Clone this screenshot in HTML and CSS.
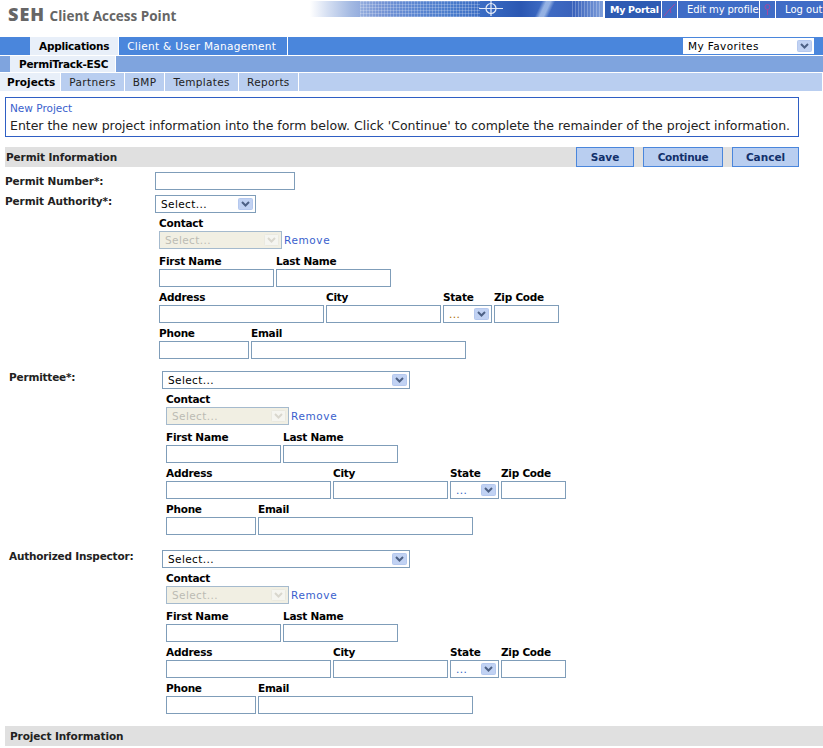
FILE: index.html
```html
<!DOCTYPE html>
<html lang="en">
<head>
    <meta charset="UTF-8">
    <meta name="viewport" content="width=device-width, initial-scale=1.0">
    <title>SEH Client Access Point</title>
    <link rel="stylesheet" href="styles.css">
</head>
<body>
    <header class="top">
        <div class="logo"><b>SEH</b> Client Access Point</div>
        <div class="banner">
            <svg class="cross" width="26" height="17" viewBox="0 0 26 17">
                <circle cx="13" cy="8.5" r="5" fill="none" stroke="#e4ebf7" stroke-width="1.2"/>
                <path d="M1 8.5H25M13 1V16" stroke="#e4ebf7" stroke-width="1.2"/>
            </svg>
        </div>
        <nav class="toplinks">
            <a class="current">My Portal</a>
            <span class="sep">
                <svg width="15" height="17" viewBox="0 0 15 17"><path d="M2 15L8 8L13 3M8 8L9 12" fill="none" stroke="#a3479f" stroke-width="1"/></svg>
            </span>
            <a class="edit">Edit my profile</a>
            <span class="sep">
                <svg width="15" height="17" viewBox="0 0 15 17"><circle cx="7.5" cy="6" r="2.5" fill="none" stroke="#a3479f"/><path d="M7.5 8.5V14" stroke="#a3479f"/></svg>
            </span>
            <a class="logout">Log out</a>
        </nav>
    </header>

    <div class="nav nav1">
        <a class="on">Applications</a>
        <a class="client">Client &amp; User Management</a>
        <select class="fav"><option>My Favorites</option></select>
    </div>
    <div class="nav nav2">
        <a class="on">PermiTrack-ESC</a>
    </div>
    <div class="nav nav3">
        <a class="on">Projects</a>
        <a>Partners</a>
        <a>BMP</a>
        <a>Templates</a>
        <a>Reports</a>
    </div>

    <div class="message">
        <div class="msg-title">New Project</div>
        <div class="msg-text">Enter the new project information into the form below. Click 'Continue' to complete the remainder of the project information.</div>
    </div>

    <div class="section">
        <span>Permit Information</span>
        <div class="buttons">
            <button class="b-save">Save</button>
            <button class="b-continue">Continue</button>
            <button class="b-cancel">Cancel</button>
        </div>
    </div>

    <div class="field number">
        <label>Permit Number*:</label>
        <input type="text" class="w140">
    </div>

    <div class="field authority">
        <label>Permit Authority*:</label>
        <div>
            <select class="w101"><option>Select...</option></select>
            <div class="contact">
                <div class="head">Contact</div>
                <div class="row">
                    <select class="w123" disabled><option>Select...</option></select>
                    <a class="remove">Remove</a>
                </div>
                <div class="row names">
                    <div class="col"><span>First Name</span><input type="text" class="w115"></div>
                    <div class="col"><span>Last Name</span><input type="text" class="w115"></div>
                </div>
                <div class="row">
                    <div class="col"><span>Address</span><input type="text" class="w165"></div>
                    <div class="col"><span>City</span><input type="text" class="w115"></div>
                    <div class="col"><span>State</span><select class="w49 brown"><option>...</option></select></div>
                    <div class="col"><span>Zip Code</span><input type="text" class="w65"></div>
                </div>
                <div class="row">
                    <div class="col"><span>Phone</span><input type="text" class="w90"></div>
                    <div class="col"><span>Email</span><input type="text" class="w215"></div>
                </div>
            </div>
        </div>
    </div>

    <div class="field party permittee">
        <label>Permittee*:</label>
        <div>
            <select class="w248"><option>Select...</option></select>
            <div class="contact">
                <div class="head">Contact</div>
                <div class="row">
                    <select class="w123" disabled><option>Select...</option></select>
                    <a class="remove">Remove</a>
                </div>
                <div class="row names">
                    <div class="col"><span>First Name</span><input type="text" class="w115"></div>
                    <div class="col"><span>Last Name</span><input type="text" class="w115"></div>
                </div>
                <div class="row">
                    <div class="col"><span>Address</span><input type="text" class="w165"></div>
                    <div class="col"><span>City</span><input type="text" class="w115"></div>
                    <div class="col"><span>State</span><select class="w49 blue"><option>...</option></select></div>
                    <div class="col"><span>Zip Code</span><input type="text" class="w65"></div>
                </div>
                <div class="row">
                    <div class="col"><span>Phone</span><input type="text" class="w90"></div>
                    <div class="col"><span>Email</span><input type="text" class="w215"></div>
                </div>
            </div>
        </div>
    </div>

    <div class="field party inspector">
        <label>Authorized Inspector:</label>
        <div>
            <select class="w248"><option>Select...</option></select>
            <div class="contact">
                <div class="head">Contact</div>
                <div class="row">
                    <select class="w123" disabled><option>Select...</option></select>
                    <a class="remove">Remove</a>
                </div>
                <div class="row names">
                    <div class="col"><span>First Name</span><input type="text" class="w115"></div>
                    <div class="col"><span>Last Name</span><input type="text" class="w115"></div>
                </div>
                <div class="row">
                    <div class="col"><span>Address</span><input type="text" class="w165"></div>
                    <div class="col"><span>City</span><input type="text" class="w115"></div>
                    <div class="col"><span>State</span><select class="w49 blue"><option>...</option></select></div>
                    <div class="col"><span>Zip Code</span><input type="text" class="w65"></div>
                </div>
                <div class="row">
                    <div class="col"><span>Phone</span><input type="text" class="w90"></div>
                    <div class="col"><span>Email</span><input type="text" class="w215"></div>
                </div>
            </div>
        </div>
    </div>

    <div class="section project">
        <span>Project Information</span>
    </div>
</body>
</html>
```

FILE: styles.css
```css
html, body {
    margin: 0;
    height: 748px;
    overflow: hidden;
}

body {
    font-family: 'DejaVu Sans', Verdana, sans-serif;
    font-size: 10.5px;
    color: #000;
    background: #fff;
}

/* header */
.top {
    display: flex;
    height: 37px;
}

.logo {
    flex: none;
    width: 310px;
    padding: 5px 0 0 8px;
    box-sizing: border-box;
    font-family: 'Open Sans', sans-serif;
    font-size: 13.5px;
    font-weight: 700;
    color: #666;
    line-height: 18px;
}

.logo b {
    font-size: 18px;
    letter-spacing: 1px;
    margin-right: 1px;
}

.banner {
    flex: none;
    display: flex;
    justify-content: flex-end;
    width: 293px;
    height: 16px;
    margin-top: 1px;
    padding-right: 99px;
    box-sizing: border-box;
    background:
        linear-gradient(115deg, transparent 0 40%, rgba(170, 195, 235, 0.8) 47% 53%, transparent 60%) 205px 0 / 60px 16px no-repeat,
        repeating-linear-gradient(90deg, rgba(255, 255, 255, 0.22) 0 1px, transparent 1px 3px) 50px 0 / 120px 16px no-repeat,
        repeating-linear-gradient(0deg, rgba(255, 255, 255, 0.22) 0 1px, transparent 1px 3px) 50px 0 / 120px 16px no-repeat,
        repeating-linear-gradient(90deg, rgba(255, 255, 255, 0.25) 0 1px, transparent 1px 3px) 262px 0 / 30px 16px no-repeat,
        linear-gradient(90deg, #fff 0%, #d5dff2 6%, #a3b9e2 14%, #7795d5 24%, #5f88d2 34%, #4a7ccc 48%, #3667c0 62%, #2b57b2 72%, #3f6cc4 80%, #3a62bb 90%, #7f9fdb 100%);
}

.cross {
    margin-top: -1px;
}

.toplinks {
    display: flex;
    align-items: stretch;
    height: 17px;
    margin-top: 0;
    margin-left: 2px;
    padding-top: 1px;
    flex: 1;
    font-size: 10px;
}

.toplinks a {
    display: flex;
    align-items: center;
    margin-right: 1px;
    background: #3f6cc6;
    color: #fff;
    white-space: nowrap;
}

.toplinks a.current {
    width: 56px;
    padding-left: 5px;
    box-sizing: border-box;
    background: #2e5bb3;
    font-weight: bold;
    font-size: 9.5px;
    letter-spacing: -0.3px;
}

.toplinks a.edit {
    width: 81px;
    padding-left: 9px;
    box-sizing: border-box;
    letter-spacing: -0.1px;
}

.toplinks a.logout {
    flex: 1;
    margin-right: 0;
    padding-left: 9px;
}

.toplinks .sep {
    width: 15px;
    margin-right: 1px;
    background: #3f6cc6;
}

/* tabs */
.nav {
    display: flex;
    align-items: stretch;
    margin-bottom: 1px;
}

.nav a {
    display: flex;
    align-items: center;
    padding: 0 8px;
    border-right: 1px solid #fff;
    color: #fff;
    letter-spacing: 0.2px;
}

.nav a.on {
    background: #e8eff9;
    color: #000;
    font-weight: bold;
    letter-spacing: -0.25px;
}

.nav1 {
    height: 18px;
    padding-left: 30px;
    background: #4a86dc;
}

.nav1 a.client {
    padding: 0 11px 0 8px;
    letter-spacing: 0.3px;
}

.nav1 a.on {
    padding: 0 9px;
}

.nav2 {
    height: 16px;
    padding-left: 10px;
    background: #7fa4de;
}

.nav2 a.on {
    padding: 0 7px 0 9px;
}

.nav3 {
    height: 18px;
    width: 822px;
    margin-bottom: 6px;
    background: #b9cef0;
}

.nav3 a {
    color: #222;
    padding: 0 8px;
    letter-spacing: 0.35px;
}

.nav3 a.on {
    padding: 0 5px 0 7px;
    letter-spacing: 0;
}

.nav .fav {
    width: 131px;
    height: 16px;
    margin: 1px 9px 0 auto;
    border: 0;
}

/* message */
.message {
    width: 794px;
    height: 40px;
    margin-left: 5px;
    box-sizing: border-box;
    border: 1px solid #2f5fc4;
    padding: 3px 4px;
}

.msg-title {
    color: #3a5fcd;
    line-height: 14px;
}

.msg-text {
    font-size: 12.5px;
    line-height: 21px;
    color: #222;
    letter-spacing: -0.01px;
    white-space: nowrap;
}

/* section bars */
.section {
    display: flex;
    align-items: center;
    justify-content: space-between;
    width: 794px;
    height: 20px;
    margin: 10px 0 0 5px;
    background: #e0e0e0;
    font-weight: bold;
    color: #222;
    letter-spacing: -0.1px;
}

.section > span {
    padding-left: 1px;
}

.section.project {
    width: auto;
    margin-top: 12px;
    padding-left: 4px;
}

.buttons {
    display: flex;
    gap: 9px;
}

.buttons button {
    height: 20px;
    padding: 0;
    border: 1px solid #4a86dc;
    background: #b9cef0;
    color: #12306b;
    font-family: inherit;
    font-size: 10.5px;
    font-weight: bold;
}

.buttons .b-continue { letter-spacing: -0.3px; }

.b-save { width: 58px; }
.b-continue { width: 80px; }
.b-cancel { width: 67px; }

/* form */
.field {
    display: flex;
    padding-left: 5px;
}

.field label {
    width: 150px;
    color: #222;
    font-weight: bold;
    padding-top: 1px;
    letter-spacing: -0.1px;
}

.number {
    margin-top: 5px;
}

.number label {
    padding-top: 3px;
}

.authority {
    margin-top: 5px;
}

.authority label {
    padding-top: 0;
}

.party {
    padding-left: 9px;
    margin-top: 12px;
}

.party label {
    width: 153px;
    padding-top: 0;
    letter-spacing: -0.2px;
}

.inspector {
    margin-top: 15px;
}

.contact {
    margin-left: 4px;
}

.head {
    height: 18px;
    line-height: 20px;
    font-weight: bold;
    letter-spacing: -0.25px;
}

.row {
    display: flex;
    gap: 2px;
    align-items: center;
}

.names {
    margin-top: 2px;
}

.col {
    display: flex;
    flex-direction: column;
}

.col span {
    height: 18px;
    line-height: 20px;
    font-weight: bold;
    letter-spacing: -0.25px;
}

input, select {
    display: block;
    height: 18px;
    margin: 0;
    box-sizing: border-box;
    border: 1px solid #7f9db9;
    border-radius: 0;
    background-color: #fff;
    font-family: inherit;
    font-size: 10.5px;
}

select {
    appearance: none;
    padding: 0 0 0 5px;
    color: #000;
    letter-spacing: 0.4px;
    background-image:
        url("data:image/svg+xml,%3Csvg xmlns='http://www.w3.org/2000/svg' width='15' height='12'%3E%3Crect x='.5' y='.5' width='14' height='11' rx='1' fill='%23c1d2f3' stroke='%23b5c8ee'/%3E%3Cpath d='M4 4l3.5 3.5L11 4' fill='none' stroke='%234d6185' stroke-width='2'/%3E%3C/svg%3E");
    background-repeat: no-repeat;
    background-position: right 2px center;
}

select:disabled {
    background-color: #ece9d8;
    color: #a09f94;
    background-image:
        url("data:image/svg+xml,%3Csvg xmlns='http://www.w3.org/2000/svg' width='15' height='12'%3E%3Crect x='.5' y='.5' width='14' height='11' rx='1' fill='%23f2f1ea' stroke='%23e2e0d4'/%3E%3Cpath d='M4 4l3.5 3.5L11 4' fill='none' stroke='%23c9c7ba' stroke-width='2'/%3E%3C/svg%3E");
}

.brown { color: #a86a00; }
.blue { color: #2f5fc4; }

.remove {
    color: #3a5fcd;
    letter-spacing: 0.6px;
}

.w49 { width: 49px; }
.w65 { width: 65px; }
.w90 { width: 90px; }
.w101 { width: 101px; }
.w115 { width: 115px; }
.w123 { width: 123px; }
.w140 { width: 140px; }
.w165 { width: 165px; }
.w215 { width: 215px; }
.w248 { width: 248px; }
```
